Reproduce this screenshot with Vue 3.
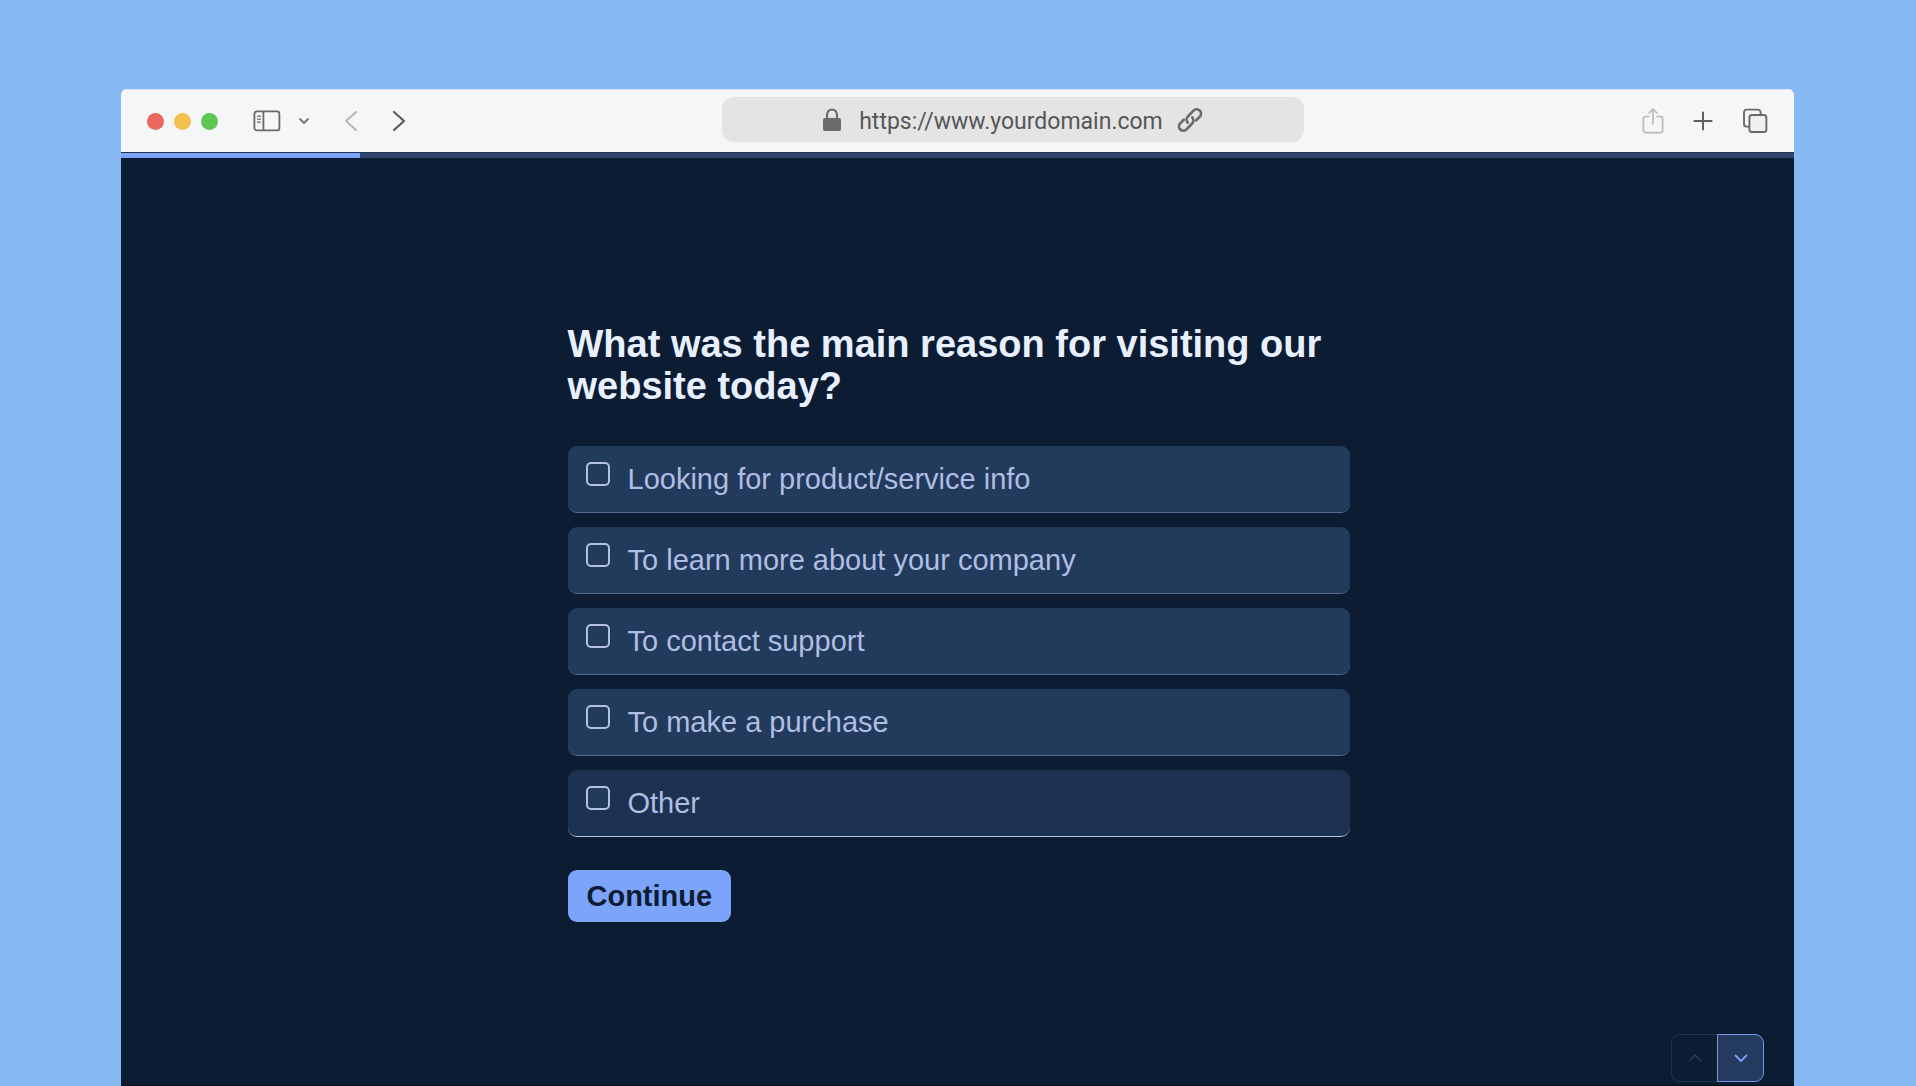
<template>
  <div class="desktop">
    <div class="browser">
      <header class="toolbar">
        <div class="toolbar-left">
          <div class="lights">
            <span class="light light-red"></span>
            <span class="light light-yellow"></span>
            <span class="light light-green"></span>
          </div>
          <button class="icon-button" type="button" aria-label="Sidebar">
            <svg width="28" height="22" viewBox="0 0 28 22" fill="none" stroke="#69696b" stroke-width="1.8">
              <rect x="1.4" y="1.4" width="25" height="19" rx="2.5" />
              <path d="M10.4 1.4V20.4" />
              <path d="M4 6.2H8M4 9.2H8M4 12.2H8" stroke-width="1.3" />
            </svg>
          </button>
          <button class="icon-button menu-button" type="button" aria-label="Tab groups">
            <svg width="12" height="8" viewBox="0 0 12 8" fill="none" stroke="#77777a" stroke-width="1.8" stroke-linecap="round" stroke-linejoin="round">
              <path d="M2 2L6 6L10 2" />
            </svg>
          </button>
          <button class="icon-button history-button" type="button" aria-label="Back">
            <svg width="14" height="22" viewBox="0 0 14 22" fill="none" stroke="#b5b6b8" stroke-width="2.1" stroke-linecap="round" stroke-linejoin="round">
              <path d="M12 2L2 11L12 20" />
            </svg>
          </button>
          <button class="icon-button history-button" type="button" aria-label="Forward">
            <svg width="14" height="22" viewBox="0 0 14 22" fill="none" stroke="#5b5b5d" stroke-width="2.2" stroke-linecap="round" stroke-linejoin="round">
              <path d="M2 2L12 11L2 20" />
            </svg>
          </button>
        </div>

        <div class="address">
          <svg class="lock" width="18" height="24" viewBox="0 0 18 24">
            <path d="M4 11V7a5 5.5 0 0 1 10 0v4" fill="none" stroke="#6b6b6d" stroke-width="2.2" />
            <rect x="0" y="10" width="18" height="13" rx="2" fill="#6b6b6d" />
          </svg>
          <input v-model="url" class="address-input" type="text" aria-label="Address" />
          <svg width="26" height="26" viewBox="0 0 26 26" fill="none" stroke="#6b6b6d" stroke-width="2.7" stroke-linecap="round">
            <path d="M10.8 15.6A4.6 4.6 0 0 1 11.1 9.2L16.5 3.6A4.3 4.3 0 0 1 22.8 9.6L19.1 13.4" />
            <path d="M15.2 10.4A4.6 4.6 0 0 1 14.9 16.8L9.5 22.4A4.3 4.3 0 0 1 3.2 16.4L6.9 12.6" />
          </svg>
        </div>

        <div class="toolbar-right">
          <button class="icon-button" type="button" aria-label="Share">
            <svg width="22" height="26" viewBox="0 0 22 26" fill="none" stroke="#b9babc" stroke-width="1.7" stroke-linecap="round" stroke-linejoin="round">
              <path d="M7 8.5H3.6A2.2 2.2 0 0 0 1.4 10.7V22.4A2.2 2.2 0 0 0 3.6 24.6H18.4A2.2 2.2 0 0 0 20.6 22.4V10.7A2.2 2.2 0 0 0 18.4 8.5H15" />
              <path d="M11 16V1.4M7 5L11 1.2L15 5" />
            </svg>
          </button>
          <button class="icon-button" type="button" aria-label="New tab">
            <svg width="20" height="20" viewBox="0 0 20 20" stroke="#5f5f61" stroke-width="2" stroke-linecap="round">
              <path d="M10 1.4V18.6M1.4 10H18.6" />
            </svg>
          </button>
          <button class="icon-button" type="button" aria-label="Show tabs">
            <svg width="26" height="26" viewBox="0 0 26 26" fill="none" stroke="#69696b" stroke-width="1.9">
              <path d="M7 18.6H4.6A2.6 2.6 0 0 1 2 16V4.2A2.6 2.6 0 0 1 4.6 1.6H16A2.6 2.6 0 0 1 18.6 4.2V7" />
              <rect x="7.4" y="7" width="17" height="17" rx="2.6" fill="#f0f0f1" />
            </svg>
          </button>
        </div>
      </header>

      <div class="progress">
        <div class="progress-fill" :style="{ width: progress + '%' }"></div>
      </div>

      <main class="page">
        <form class="survey" @submit.prevent="next">
          <fieldset class="question">
            <legend class="title">What was the main reason for visiting our website today?</legend>
            <div class="options">
              <label
                  v-for="option in options"
                  :key="option"
                  class="option"
                  :class="{ 'option-other': option === 'Other' }"
              >
                <input v-model="selected" class="checkbox" type="checkbox" :value="option" />
                <span>{{ option }}</span>
              </label>
            </div>
          </fieldset>
          <button class="continue" type="submit">Continue</button>
        </form>

        <nav class="steps">
          <button class="step step-up" type="button" disabled aria-label="Previous question">
            <svg width="14" height="8" viewBox="0 0 14 8" fill="none" stroke="currentColor" stroke-width="1.6">
              <path d="M1 7L7 1L13 7" />
            </svg>
          </button>
          <button class="step step-down" type="button" aria-label="Next question" @click="next">
            <svg width="14" height="8" viewBox="0 0 14 8" fill="none" stroke="currentColor" stroke-width="1.8">
              <path d="M1 1L7 7L13 1" />
            </svg>
          </button>
        </nav>
      </main>
    </div>
  </div>
</template>

<script setup>
import { ref, computed } from 'vue'

const url = ref('https://www.yourdomain.com')

const options = [
  'Looking for product/service info',
  'To learn more about your company',
  'To contact support',
  'To make a purchase',
  'Other'
]

const selected = ref([])
const step = ref(1)
const total = 7

const progress = computed(() => (step.value / total) * 100)

const next = () => {
  if (step.value < total) step.value++
}
</script>

<style>
body {
  margin: 0;
  background: #86b8f1;
}
</style>

<style scoped>
.desktop {
  display: flex;
  box-sizing: border-box;
  min-height: 100vh;
  padding: 89px 122px 0 121px;
  background: #86b8f1;
  font-family: "Liberation Sans", Arial, sans-serif;
}

.browser {
  display: flex;
  flex: 1;
  flex-direction: column;
  min-width: 0;
  overflow: hidden;
  border-radius: 5px 5px 0 0;
  background: #0c1c32;
}

/* Toolbar */
.toolbar {
  display: grid;
  grid-template-columns: 601fr 582fr 490fr;
  align-items: center;
  height: 63px;
  box-sizing: border-box;
  border-top: 1px solid #d3e3f6;
  background: #f5f6f8;
}

.toolbar-left {
  display: flex;
  align-items: center;
  padding-left: 26px;
}

.lights {
  display: flex;
  gap: 10px;
  margin-right: 35px;
}

.light {
  width: 17px;
  height: 17px;
  border-radius: 50%;
}

.light-red { background: #ea695e; }
.light-yellow { background: #f3bf4f; }
.light-green { background: #5fc653; }

.icon-button {
  display: flex;
  padding: 0;
  border: none;
  background: none;
  cursor: pointer;
}

.menu-button { margin-left: 17px; }
.history-button { margin-left: 34px; }

.address {
  display: flex;
  align-items: center;
  align-self: start;
  justify-content: center;
  gap: 11px;
  height: 45px;
  margin-top: 7px;
  border-radius: 12px;
  background: #e4e4e4;
}

.lock {
  margin-right: 4px;
}

.address-input {
  width: 310px;
  padding: 4px 0 0;
  border: none;
  outline: none;
  background: none;
  color: #565658;
  font-family: Roboto, sans-serif;
  font-size: 23px;
  line-height: 30px;
  text-align: center;
}

.toolbar-right {
  display: flex;
  align-items: center;
  justify-content: flex-end;
  gap: 29px;
  padding-right: 26px;
}

/* Progress */
.progress {
  height: 5px;
  border-top: 1px solid #1f3354;
  background: #2f466e;
}

.progress-fill {
  height: 100%;
  background: #7ba4fa;
}

/* Survey */
.page {
  display: grid;
  flex: 1;
  padding: 2px 0 0 2px;
  border-bottom: 1px solid #06101f;
}

.survey {
  grid-area: 1 / 1;
  place-self: center;
  box-sizing: border-box;
  width: 100%;
  max-width: 782px;
}

.question {
  min-width: 0;
  margin: 0 0 33px;
  padding: 0;
  border: none;
}

.title {
  margin-bottom: 39px;
  padding: 0;
  color: #e8f0ff;
  font-size: 38px;
  font-weight: 700;
  line-height: 42px;
}

.options {
  display: flex;
  flex-direction: column;
  gap: 14px;
}

.option {
  display: flex;
  align-items: flex-start;
  gap: 18px;
  padding: 16px 18px;
  border-bottom: 1px solid #56698f;
  border-radius: 9px;
  background: #223a5c;
  color: #afbee2;
  font-size: 29px;
  line-height: 34px;
  cursor: pointer;
}

.option-other {
  border-bottom-color: #b6c5e6;
  background: #1d3250;
}

.checkbox {
  flex: none;
  box-sizing: border-box;
  width: 24px;
  height: 24px;
  margin: 0;
  border: 2px solid #b4c1e6;
  border-radius: 5px;
  background: #223a5c;
  appearance: none;
  cursor: pointer;
}

.checkbox:checked {
  background: #7ba4fa;
}

.continue {
  display: block;
  height: 52px;
  padding: 0 19px;
  border: none;
  border-radius: 9px;
  background: #7ba4fa;
  color: #0c1c32;
  font-family: inherit;
  font-size: 29px;
  font-weight: 700;
  line-height: 34px;
  cursor: pointer;
}

/* Step buttons */
.steps {
  display: flex;
  grid-area: 1 / 1;
  place-self: end;
  margin: 0 30px 3px 0;
}

.step {
  display: flex;
  align-items: center;
  justify-content: center;
  box-sizing: border-box;
  width: 47px;
  height: 48px;
  padding: 0;
  border: 1px solid;
  background: none;
}

.step-up {
  width: 46px;
  border-color: #1f3252;
  border-right: none;
  border-radius: 9px 0 0 9px;
  color: #263a5d;
}

.step-down {
  border-color: #7399e6;
  border-radius: 0 9px 9px 0;
  background: #253a5f;
  color: #7ba4fa;
  cursor: pointer;
}
</style>
